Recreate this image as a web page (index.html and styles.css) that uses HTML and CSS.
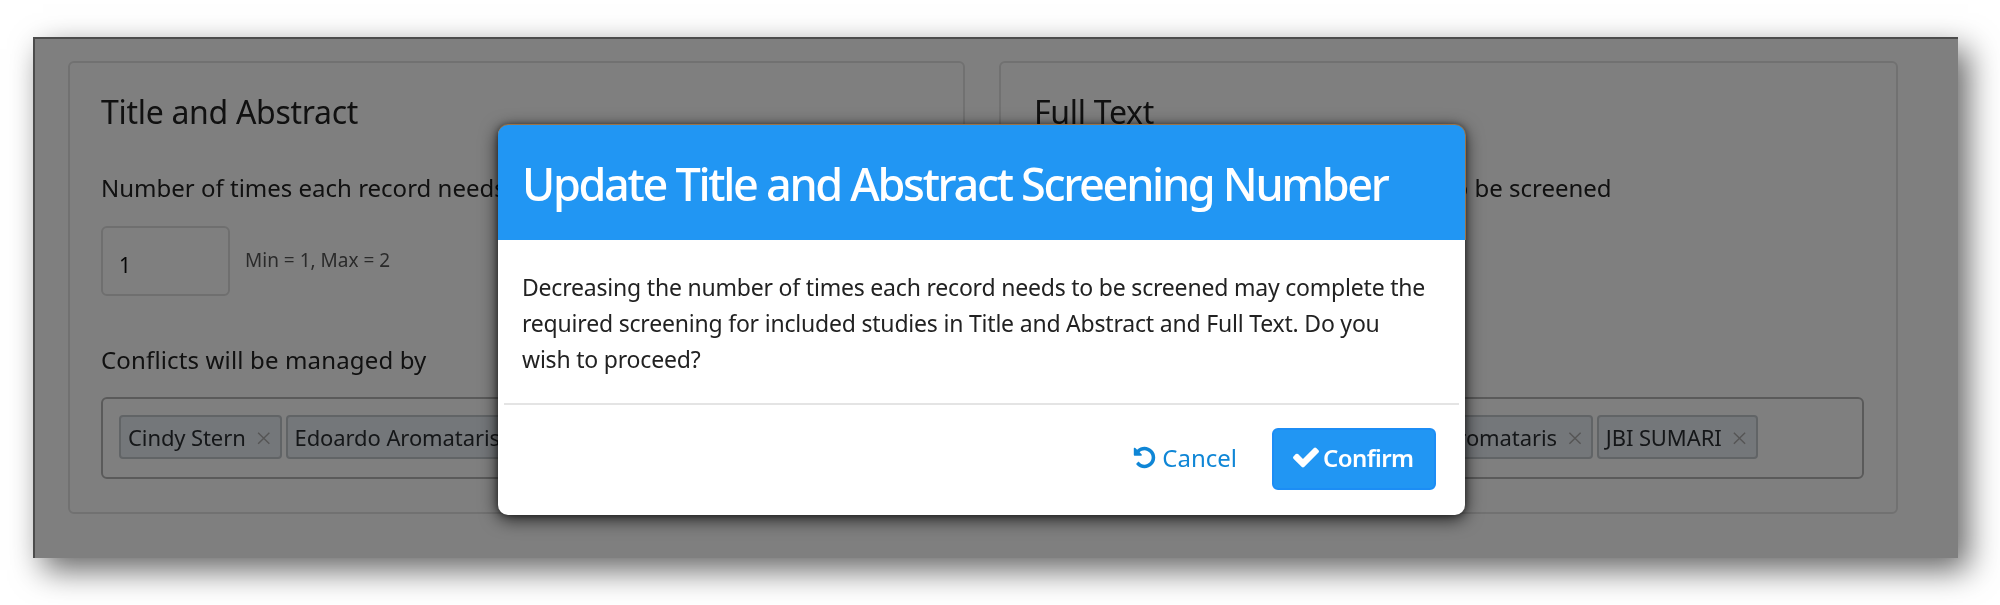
FILE: index.html
```html
<!DOCTYPE html>
<html lang="en">
<head>
<meta charset="utf-8">
<title>Update Title and Abstract Screening Number</title>
<link rel="stylesheet" href="styles.css">
</head>
<body>
<div class="page">
  <div class="screen">
    <section class="panel">
      <h2 class="panel-title">Title and Abstract</h2>
      <p class="label">Number of times each record needs to be screened</p>
      <div class="number-row">
        <div class="number-input">1</div>
        <span class="hint">Min = 1, Max = 2</span>
      </div>
      <p class="label conflicts">Conflicts will be managed by</p>
      <div class="tagbox">
        <span class="tag">Cindy Stern <span class="tag-x">×</span></span>
        <span class="tag">Edoardo Aromataris <span class="tag-x">×</span></span>
        <span class="tag behind">JBI SUMARI <span class="tag-x">×</span></span>
      </div>
    </section>
    <section class="panel panel-right">
      <h2 class="panel-title">Full Text</h2>
      <p class="label">Number of times each record needs to be screened</p>
      <div class="number-row behind">
        <div class="number-input">1</div>
        <span class="hint">Min = 1, Max = 2</span>
      </div>
      <p class="label conflicts behind">Conflicts will be managed by</p>
      <div class="tagbox">
        <span class="tag behind">Cindy Stern <span class="tag-x">×</span></span>
        <span class="tag tag-spacer behind"></span>
        <span class="tag">Edoardo Aromataris <span class="tag-x">×</span></span>
        <span class="tag">JBI SUMARI <span class="tag-x">×</span></span>
      </div>
    </section>
    <div class="overlay"></div>
    <div class="modal">
      <header class="modal-header">Update Title and Abstract Screening Number</header>
      <div class="modal-body">Decreasing the number of times each record needs to be screened may complete the required screening for included studies in Title and Abstract and Full Text. Do you wish to proceed?</div>
      <footer class="modal-footer">
        <a class="cancel">
          <svg class="icon-undo" viewBox="0 0 1792 1792"><path d="M1664 896q0 156-61 298t-164 245-245 164-298 61q-172 0-327-72.5t-264-204.5q-7-10-6.5-22.5t8.5-20.5l137-138q10-9 25-9 16 2 23 12 73 95 179 147t225 52q104 0 198.5-40.5t163.5-109.5 109.5-163.5 40.5-198.5-40.5-198.5-109.5-163.5-163.5-109.5-198.5-40.5q-98 0-188 35.5t-160 101.5l137 138q31 30 14 69-17 40-59 40h-448q-26 0-45-19t-19-45v-448q0-42 40-59 39-17 69 14l130 129q107-101 244.5-156.5t284.5-55.5q156 0 298 61t245 164 164 245 61 298z"/></svg>
          Cancel
        </a>
        <button class="confirm" type="button">
          <svg class="icon-check" viewBox="0 0 1792 1792"><path d="M1671 566q0 40-28 68l-724 724-136 136q-28 28-68 28t-68-28l-136-136-362-362q-28-28-28-68t28-68l136-136q28-28 68-28t68 28l294 295 656-657q28-28 68-28t68 28l136 136q28 28 28 68z"/></svg>
          Confirm
        </button>
      </footer>
    </div>
  </div>
</div>
</body>
</html>
```
FILE: styles.css
```css
* { box-sizing: border-box; }
html, body { margin: 0; padding: 0; background: #fff; }
body {
  width: 2000px;
  height: 605px;
  overflow: hidden;
  font-family: "Noto Sans", "Liberation Sans", sans-serif;
}
.page { padding: 37px 42px 0 33px; filter: blur(0.6px); }
.screen {
  position: relative;
  width: 1925px;
  height: 521px;
  background: #fff;
  display: flex;
  gap: 34px;
  padding: 22px 60px 0 33px;
  box-shadow: 10px 12px 30px rgba(0,0,0,.6);
  border-top: 2px solid #999;
  border-left: 2px solid #999;
}
.panel {
  flex: 1 1 0;
  height: 453px;
  border: 2px solid #e2e2e2;
  border-radius: 6px;
  padding: 27px 0 0 31px;
  min-width: 0;
}
.panel-right { padding-left: 33px; }
.behind { visibility: hidden; }
.panel-title {
  margin: 0;
  font-size: 32px;
  line-height: 44px;
  font-weight: 400;
  color: #222;
  letter-spacing: -0.3px;
}
.label {
  margin: 0;
  font-size: 24px;
  line-height: 32px;
  color: #222;
  white-space: nowrap;
}
.panel-title + .label { margin-top: 38px; }
.number-row {
  display: flex;
  align-items: center;
  gap: 15px;
  margin-top: 22px;
}
.number-input {
  width: 129px;
  height: 70px;
  border: 2px solid #dedede;
  border-radius: 6px;
  padding: 12px 16px 0;
  font-size: 21px;
  line-height: 50px;
  color: #111;
}
.hint {
  font-size: 19px;
  color: #555;
  margin-top: -2px;
}
.conflicts { margin-top: 48px; letter-spacing: 0.15px; }
.tagbox {
  display: flex;
  flex-wrap: nowrap;
  gap: 4px;
  margin-top: 21px;
  width: 830px;
  height: 82px;
  border: 2px solid #b4b4b4;
  border-radius: 6px;
  padding: 16px 16px;
}
.tag {
  display: inline-flex;
  align-items: center;
  gap: 10px;
  height: 44px;
  padding: 0 8px 0 7px;
  border: 2px solid #c3c8cd;
  border-radius: 4px;
  background: #e9eef4;
  color: #2b2f33;
  font-size: 22px;
  letter-spacing: -0.1px;
  white-space: nowrap;
}
.tag-spacer { width: 120px; }
.tag-x {
  font-size: 28px;
  line-height: 1;
  color: #aaa;
  font-weight: 300;
}
.overlay {
  position: absolute;
  inset: -2px 0 0 -2px;
  background: rgba(0,0,0,.5);
}
.modal {
  position: absolute;
  left: 463px;
  top: 86px;
  width: 967px;
  height: 390px;
  background: #fff;
  border-radius: 10px;
  box-shadow: 0 4px 18px rgba(0,0,0,.75), 0 0 6px rgba(0,0,0,.5);
  display: flex;
  flex-direction: column;
}
.modal-header {
  height: 115px;
  flex: none;
  background: #2196f3;
  border-radius: 10px 10px 0 0;
  box-shadow: 0 -1px 0 #9a7347, 1px 0 0 #9a7347;
  color: #fff;
  font-size: 45px;
  font-weight: 500;
  line-height: 117px;
  padding-left: 24px;
  white-space: nowrap;
  letter-spacing: -2.3px;
}
.modal-body {
  padding: 29px 35px 24px 24px;
  height: 163px;
  flex: none;
  font-size: 23px;
  line-height: 36px;
  color: #222;
  letter-spacing: -0.2px;
}
.modal-footer {
  flex: 1;
  margin: 0 6px;
  border-top: 2px solid #e4e4e4;
  display: flex;
  justify-content: flex-end;
  align-items: flex-start;
  gap: 35px;
  padding: 23px 23px 0 0;
}
.cancel {
  display: inline-flex;
  align-items: center;
  gap: 5px;
  height: 58px;
  color: #0f86d6;
  font-size: 24px;
}
.icon-undo { width: 25px; height: 25px; fill: #0f86d6; }
.confirm {
  display: inline-flex;
  align-items: center;
  justify-content: flex-start;
  gap: 2px;
  width: 164px;
  height: 62px;
  padding: 0 0 4px 17px;
  border: 2px solid #1c8df5;
  border-radius: 6px;
  background: #2196f3;
  color: #fff;
  font: 600 24px "Noto Sans", "Liberation Sans", sans-serif;
  letter-spacing: -0.6px;
}
.icon-check { width: 30px; height: 30px; fill: #fff; }
```
